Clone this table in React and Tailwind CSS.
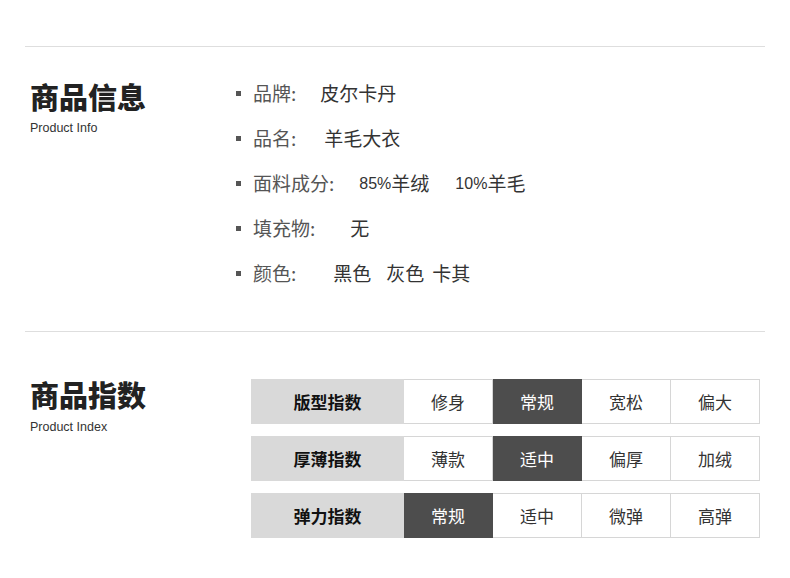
const info = [
    { label: "品牌:", values: [{ text: "皮尔卡丹", ml: "ml-[24px]" }] },
    { label: "品名:", values: [{ text: "羊毛大衣", ml: "ml-[28px]" }] },
    {
        label: "面料成分:",
        values: [
            { text: "85%", ml: "ml-[25px]", small: true },
            { text: "羊绒", ml: "" },
            { text: "10%", ml: "ml-[26px]", small: true },
            { text: "羊毛", ml: "" },
        ],
    },
    { label: "填充物:", values: [{ text: "无", ml: "ml-[35px]" }] },
    {
        label: "颜色:",
        values: [
            { text: "黑色", ml: "ml-[37px]" },
            { text: "灰色", ml: "ml-[15px]" },
            { text: "卡其", ml: "ml-[8px]" },
        ],
    },
];

const indexRows = [
    { label: "版型指数", options: ["修身", "常规", "宽松", "偏大"], active: 1 },
    { label: "厚薄指数", options: ["薄款", "适中", "偏厚", "加绒"], active: 1 },
    { label: "弹力指数", options: ["常规", "适中", "微弹", "高弹"], active: 0 },
];

const SectionTitle = ({ zh, en, className, gap }) => (
    <div className={"pl-[5px] " + className}>
        <h2 className="text-[29px] leading-[29px] font-black text-[#222]">{zh}</h2>
        <p className={gap + " text-[12.5px] leading-[13px] text-[#333] font-['Liberation_Sans',sans-serif]"}>{en}</p>
    </div>
);

export default function App() {
    return (
        <div className="w-[790px] h-[578px] bg-white px-[25px] pt-[46px] font-['Noto_Sans_CJK_SC','Noto_Sans',sans-serif] overflow-hidden">
            <div className="h-px bg-[#dedede]" />

            {/* Product Info */}
            <section className="flex items-start pb-[35px]">
                <SectionTitle zh="商品信息" en="Product Info" gap="mt-[11px]" className="w-[211px] mt-[35px]" />
                <ul className="mt-[24px]">
                    {info.map((row) => (
                        <li key={row.label} className="flex items-center h-[45px] text-[19px] text-[#555]">
                            <span className="w-[5px] h-[5px] bg-[#555] mr-[12px]" />
                            <span>{row.label}</span>
                            {row.values.map((v, i) => (
                                <span
                                    key={i}
                                    className={
                                        v.ml +
                                        " text-[#333] " +
                                        (v.small ? "text-[16px] font-['Liberation_Sans',sans-serif]" : "")
                                    }
                                >
                                    {v.text}
                                </span>
                            ))}
                        </li>
                    ))}
                </ul>
            </section>

            <div className="h-px bg-[#dedede]" />

            {/* Product Index */}
            <section className="flex items-start">
                <SectionTitle zh="商品指数" en="Product Index" gap="mt-[12px]" className="w-[226px] mt-[48px]" />
                <div className="mt-[47px] flex flex-col gap-[12px]">
                    {indexRows.map((row) => (
                        <div key={row.label} className="flex h-[45px] text-[17px]">
                            <div className="w-[153px] bg-[#d9d9d9] flex items-center justify-center font-bold text-[#111]">
                                {row.label}
                            </div>
                            {row.options.map((opt, i) => (
                                <div
                                    key={opt + i}
                                    className={
                                        i === row.active
                                            ? "w-[89px] flex items-center justify-center bg-[#4d4d4d] text-white border-y border-r border-[#4d4d4d]"
                                            : "w-[89px] flex items-center justify-center bg-white text-[#333] border-y border-r border-[#d6d6d6]"
                                    }
                                >
                                    {opt}
                                </div>
                            ))}
                        </div>
                    ))}
                </div>
            </section>
        </div>
    );
}
